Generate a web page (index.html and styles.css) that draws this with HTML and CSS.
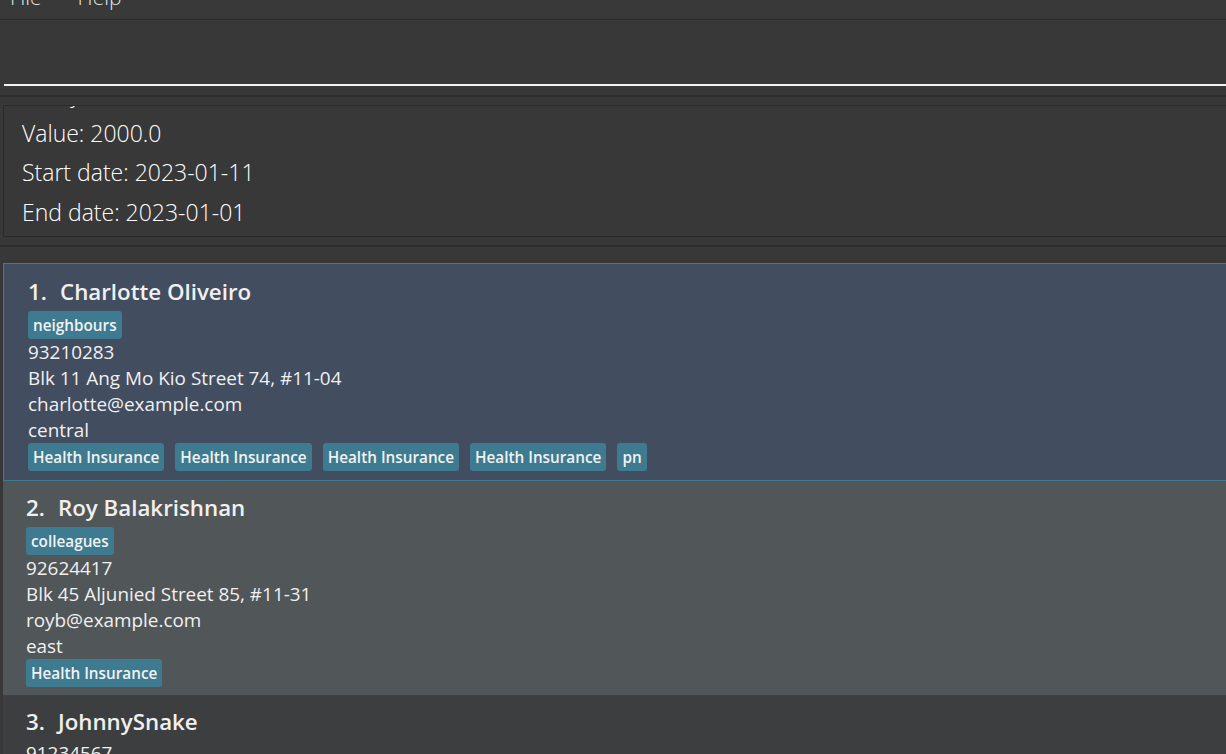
FILE: index.html
```html
<!DOCTYPE html>
<html lang="en">
<head>
    <meta charset="UTF-8">
    <meta name="viewport" content="width=device-width, initial-scale=1.0">
    <title>Address App</title>
    <link rel="stylesheet" href="styles.css">
</head>
<body>
    <div class="menu-bar">
        <ul class="menu">
            <li>File</li>
            <li>Help</li>
        </ul>
    </div>

    <div class="command-pane">
        <div class="command-box"></div>
    </div>

    <div class="divider"></div>

    <div class="result-pane">
        <div class="result-display">
            <div class="result-text">
                <p>Policy: Health Insurance</p>
                <p>Value: 2000.0</p>
                <p>Start date: 2023-01-11</p>
                <p>End date: 2023-01-01</p>
            </div>
        </div>
    </div>

    <div class="divider"></div>

    <div class="person-list">
        <div class="person-card selected">
            <div class="name"><span class="id">1.</span>Charlotte Oliveiro</div>
            <div class="tags">
                <span class="tag">neighbours</span>
            </div>
            <div class="field">93210283</div>
            <div class="field">Blk 11 Ang Mo Kio Street 74, #11-04</div>
            <div class="field">charlotte@example.com</div>
            <div class="field">central</div>
            <div class="tags">
                <span class="tag">Health Insurance</span>
                <span class="tag">Health Insurance</span>
                <span class="tag">Health Insurance</span>
                <span class="tag">Health Insurance</span>
                <span class="tag">pn</span>
            </div>
        </div>

        <div class="person-card odd">
            <div class="name"><span class="id">2.</span>Roy Balakrishnan</div>
            <div class="tags">
                <span class="tag">colleagues</span>
            </div>
            <div class="field">92624417</div>
            <div class="field">Blk 45 Aljunied Street 85, #11-31</div>
            <div class="field">royb@example.com</div>
            <div class="field">east</div>
            <div class="tags">
                <span class="tag">Health Insurance</span>
            </div>
        </div>

        <div class="person-card even">
            <div class="name"><span class="id">3.</span>JohnnySnake</div>
            <div class="field">91234567</div>
        </div>
    </div>
</body>
</html>
```

FILE: styles.css
```css
html, body {
    margin: 0;
    height: 754px;
    overflow: hidden;
}

body {
    font-family: "Open Sans", "Noto Sans", sans-serif;
    background-color: #383838;
    color: #fff;
}

.menu-bar {
    height: 19px;
    overflow: hidden;
    border-bottom: 1px solid #2c2c2c;
    background-color: #393939;
}

.menu {
    list-style: none;
    margin: -13px 0 0 0;
    padding: 0 0 0 10px;
    display: flex;
    gap: 36px;
    font-size: 21px;
    line-height: 20px;
    font-weight: 300;
    color: #e6e6e6;
}

.command-pane {
    height: 75px;
    padding-left: 4px;
}

.command-box {
    height: 64px;
    border-bottom: 2px solid #f2f2f2;
}

.divider {
    height: 2px;
    background-color: #2d2d2d;
}

.result-pane {
    height: 148px;
    padding: 8px 0 0 3px;
    box-sizing: border-box;
}

.result-display {
    height: 132px;
    border: 1px solid #2a2a2a;
    border-right: none;
    overflow: hidden;
    padding-left: 18px;
    box-sizing: border-box;
}

.result-text {
    margin-top: -32px;
}

.result-text p {
    margin: 0;
    font-size: 23px;
    font-weight: 300;
    line-height: 39.5px;
    color: #fff;
}

.person-list {
    padding: 16px 0 0 3px;
}

.person-card {
    padding: 9px 0 8px 23px;
}

.person-card.selected {
    background-color: #424d5f;
    border: 1px solid #3e7b91;
    border-right: none;
    padding: 10px 0 9px 24px;
}

.person-card.odd {
    background-color: #515658;
}

.person-card.even {
    background-color: #3c3e3f;
}

.name {
    font-size: 22.3px;
    font-weight: 600;
    line-height: 36px;
    color: #f0f0f0;
}

.name .id {
    display: inline-block;
    width: 32px;
}

.tags {
    display: flex;
    gap: 11px;
    margin-top: 1px;
}

.field + .tags {
    margin-top: 0;
}

.tag {
    height: 28px;
    line-height: 28px;
    padding: 0 5px;
    background-color: #3e7b91;
    border-radius: 3px;
    font-size: 15.3px;
    font-weight: 600;
    color: #f2f2f2;
}

.field {
    font-size: 18.9px;
    line-height: 26px;
    color: #f0f0f0;
}
```
